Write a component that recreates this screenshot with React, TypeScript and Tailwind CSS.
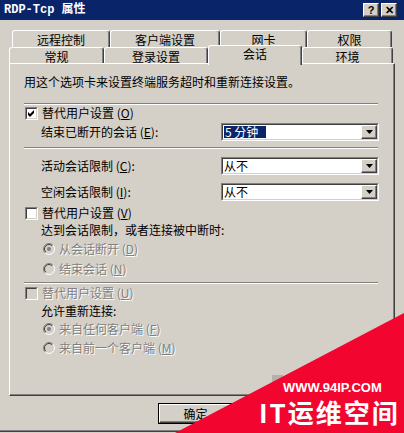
import type { ReactNode } from "react"

// Classic Windows 2000 "RDP-Tcp 属性" dialog, 会话 tab

const FACE = "bg-[#d4d0c8]"
const RAISED =
  "border border-t-white border-l-white border-b-[#404040] border-r-[#404040] shadow-[inset_-1px_-1px_0_#808080]"
const SUNKEN = "border border-t-[#808080] border-l-[#808080] border-b-white border-r-white"
const DIM = "text-[#808080] [text-shadow:1px_1px_0_#fff]"

function K({ k }: { k: string }) {
  return (
    <span>
      {" "}(<span className="underline underline-offset-1">{k}</span>)
    </span>
  )
}

function Sep() {
  return <div className="h-[2px] w-[354px] border-t border-b border-t-[#808080] border-b-white" />
}

function Check({ checked = false, disabled = false }: { checked?: boolean; disabled?: boolean }) {
  return (
    <span className={`flex h-[13px] w-[13px] shrink-0 ${SUNKEN}`}>
      <span
        className={`flex flex-1 items-center justify-center border border-t-[#404040] border-l-[#404040] border-b-[#d4d0c8] border-r-[#d4d0c8] ${
          disabled ? FACE : "bg-white"
        }`}
      >
        {checked && (
          <svg width="7" height="7" viewBox="0 0 7 7">
            <path d="M0 2 L2 4 L6 0 L6 3 L2 7 L0 5 Z" fill="#000" />
          </svg>
        )}
      </span>
    </span>
  )
}

function Radio({ on = false }: { on?: boolean }) {
  return (
    <svg width="12" height="12" viewBox="0 0 12 12" className="shrink-0">
      <circle cx="6" cy="6" r="5.5" fill="#d4d0c8" />
      <path d="M9.9 2.1 A5.5 5.5 0 0 0 2.1 9.9" fill="none" stroke="#808080" />
      <path d="M2.1 9.9 A5.5 5.5 0 0 0 9.9 2.1" fill="none" stroke="#fff" />
      <path d="M9.2 2.8 A4.5 4.5 0 0 0 2.8 9.2" fill="none" stroke="#404040" />
      {on && <circle cx="6" cy="6" r="2" fill="#808080" />}
    </svg>
  )
}

function Combo({ children }: { children: ReactNode }) {
  return (
    <div className={`flex h-[18px] w-[158px] ${SUNKEN}`}>
      <div className="flex flex-1 items-center border border-t-[#404040] border-l-[#404040] border-b-[#d4d0c8] border-r-[#d4d0c8] bg-white">
        <div className="flex-1 pl-[1px] leading-[12px]">{children}</div>
        <div className={`flex h-full w-[16px] items-center justify-center ${FACE} ${RAISED}`}>
          <svg width="7" height="4" viewBox="0 0 7 4">
            <path d="M0 0 H7 L3.5 4 Z" fill="#000" />
          </svg>
        </div>
      </div>
    </div>
  )
}

function Tab({ w, label, active = false }: { w: number; label: string; active?: boolean }) {
  return (
    <div
      className={`flex items-center justify-center rounded-t-[3px] border-t border-l border-t-white border-l-white border-r border-r-[#404040] shadow-[inset_-1px_0_0_#808080] ${FACE} ${
        active ? "relative z-10 -mt-[2px] h-[20px] pb-[3px]" : "h-[17px] pt-[1px]"
      }`}
      style={{ width: w }}
    >
      {label}
    </div>
  )
}

function TitleButton({ children }: { children: ReactNode }) {
  return (
    <div
      className={`flex h-[14px] w-[16px] items-center justify-center font-['Liberation_Sans',sans-serif] text-[11px] font-bold leading-none text-black ${FACE} ${RAISED}`}
    >
      {children}
    </div>
  )
}

function Row({ mt, children }: { mt: string; children: ReactNode }) {
  return <div className={`flex h-[14px] items-center ${mt}`}>{children}</div>
}

export default function App() {
  return (
    <div
      className={`relative flex h-[433px] w-[404px] flex-col overflow-hidden ${FACE} font-['Noto_Sans_CJK_SC','Liberation_Sans',sans-serif] text-[12px] leading-[14px] text-black`}
    >
      {/* title bar */}
      <div className="flex h-[20px] items-center bg-[#0a246a] pl-[4px] pr-[7px] text-white">
        <span className="font-['Liberation_Mono','Noto_Sans_CJK_SC',monospace] text-[12px] font-bold">RDP-Tcp 属性</span>
        <div className="ml-auto flex gap-[2px]">
          <TitleButton>?</TitleButton>
          <TitleButton>✕</TitleButton>
        </div>
      </div>

      {/* tabs */}
      <div className="mt-[10px] ml-[12px] flex">
        <Tab w={98} label="远程控制" />
        <Tab w={110} label="客户端设置" />
        <Tab w={87} label="网卡" />
        <Tab w={85} label="权限" />
      </div>
      <div className="ml-[9px] flex h-[16px] items-start">
        <Tab w={95} label="常规" />
        <Tab w={104} label="登录设置" />
        <Tab w={94} label="会话" active />
        <Tab w={91} label="环境" />
      </div>

      {/* tab page */}
      <div className={`ml-[9px] flex h-[333px] w-[386px] flex-col pl-[14px] ${RAISED}`}>
        <Row mt="mt-[11px]">用这个选项卡来设置终端服务超时和重新连接设置。</Row>
        <div className="mt-[14px]">
          <Sep />
        </div>
        <Row mt="mt-[1px]">
          <span className="ml-[1px]">
            <Check checked />
          </span>
          <span className="ml-[4px]">
            替代用户设置
            <K k="O" />
          </span>
        </Row>
        <div className="mt-[3px] flex h-[18px] items-center">
          <span className="w-[197px] pl-[17px]">
            结束已断开的会话
            <K k="E" />:
          </span>
          <Combo>
            <span className="inline-block w-[42px] bg-[#0a246a] pl-[1px] text-white">5 分钟</span>
          </Combo>
        </div>
        <div className="mt-[6px]">
          <Sep />
        </div>
        <div className="mt-[8px] flex h-[18px] items-center">
          <span className="w-[197px] pl-[17px]">
            活动会话限制
            <K k="C" />:
          </span>
          <Combo>从不</Combo>
        </div>
        <div className="mt-[8px] flex h-[18px] items-center">
          <span className="w-[197px] pl-[17px]">
            空闲会话限制
            <K k="I" />:
          </span>
          <Combo>从不</Combo>
        </div>
        <Row mt="mt-[5px]">
          <span className="ml-[1px]">
            <Check />
          </span>
          <span className="ml-[4px]">
            替代用户设置
            <K k="V" />
          </span>
        </Row>
        <Row mt="mt-[3px]">
          <span className="pl-[17px]">达到会话限制，或者连接被中断时:</span>
        </Row>
        <Row mt="mt-[5px]">
          <span className="ml-[19px]">
            <Radio on />
          </span>
          <span className={`ml-[4px] ${DIM}`}>
            从会话断开
            <K k="D" />
          </span>
        </Row>
        <Row mt="mt-[6px]">
          <span className="ml-[19px]">
            <Radio />
          </span>
          <span className={`ml-[4px] ${DIM}`}>
            结束会话
            <K k="N" />
          </span>
        </Row>
        <div className="mt-[6px]">
          <Sep />
        </div>
        <Row mt="mt-[2px]">
          <span className="ml-[1px]">
            <Check disabled />
          </span>
          <span className={`ml-[4px] ${DIM}`}>
            替代用户设置
            <K k="U" />
          </span>
        </Row>
        <Row mt="mt-[4px]">
          <span className="pl-[17px]">允许重新连接:</span>
        </Row>
        <Row mt="mt-[4px]">
          <span className="ml-[19px]">
            <Radio on />
          </span>
          <span className={`ml-[4px] ${DIM}`}>
            来自任何客户端
            <K k="F" />
          </span>
        </Row>
        <Row mt="mt-[5px]">
          <span className="ml-[19px]">
            <Radio />
          </span>
          <span className={`ml-[4px] ${DIM}`}>
            来自前一个客户端
            <K k="M" />
          </span>
        </Row>
      </div>

      {/* buttons */}
      <div className="mt-[7px] flex pl-[158px]">
        <div className="flex h-[21px] w-[75px] border border-black">
          <div className={`flex flex-1 items-center justify-center ${RAISED}`}>确定</div>
        </div>
        <div className="ml-[39px] -mt-[28px] h-[13px] w-[11px] bg-[#b4b0aa]" />
      </div>
      <div className="mt-auto mb-[1px] h-[2px] border-t border-b border-t-[#808080] border-b-[#404040]" />

      {/* site watermark */}
      <div className="pointer-events-none absolute inset-0">
        <svg width="404" height="433" className="absolute left-0 top-0">
          <polygon points="404,313 404,433 175,433" fill="#f2062f" />
        </svg>
        <span className="absolute left-[283px] top-[381px] whitespace-nowrap font-['Liberation_Sans',sans-serif] text-[13px] font-bold leading-none text-white">
          WWW.94IP.COM
        </span>
        <span className="absolute left-[259px] top-[399px] whitespace-nowrap font-['Noto_Sans_CJK_SC',sans-serif] text-[26px] font-bold leading-none tracking-[2px] text-white">
          IT运维空间
        </span>
      </div>
    </div>
  )
}
